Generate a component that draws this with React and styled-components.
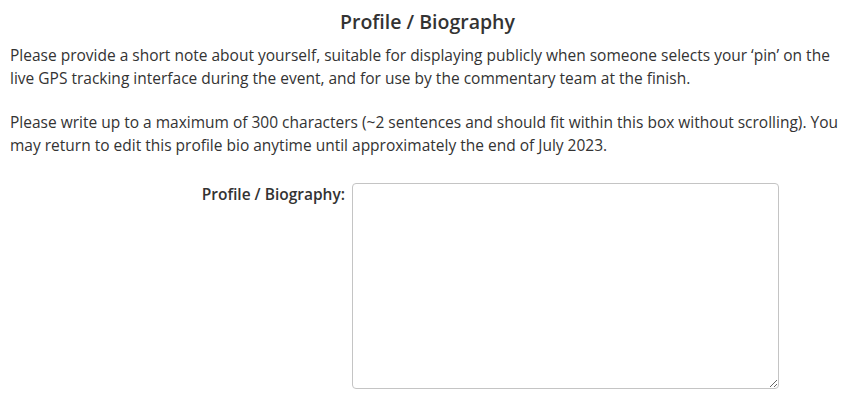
import styled, { createGlobalStyle } from 'styled-components';

const GlobalStyle = createGlobalStyle`
  body {
    margin: 0;
    background: #fff;
    font-family: "Open Sans", "Noto Sans", sans-serif;
    color: #333;
  }
`;

const Page = styled.div`
  padding: 10px 10px 0 10px;
  width: 835px;
`;

const Title = styled.h2`
  margin: 0 0 10px 0;
  text-align: center;
  font-size: 19.5px;
  font-weight: 600;
  line-height: 24px;
  color: #333;
`;

const Para = styled.p`
  margin: 0 0 21px 0;
  font-size: 15.5px;
  line-height: 23px;
`;

const FormRow = styled.div`
  display: grid;
  grid-template-columns: 335px 427px;
  column-gap: 7px;
  align-items: start;
  margin-top: 26px;
`;

const Label = styled.label`
  text-align: right;
  font-size: 15.5px;
  font-weight: 600;
  line-height: 20px;
  padding-top: 1px;
`;

const TextArea = styled.textarea`
  box-sizing: border-box;
  width: 427px;
  height: 206px;
  border: 1px solid #c4c4c4;
  border-radius: 4px;
  padding: 6px 8px;
  font-family: inherit;
  font-size: 14px;
  outline: none;
`;

function App() {
  return (
    <Page>
      <GlobalStyle />
      <Title>Profile / Biography</Title>
      <Para>
        Please provide a short note about yourself, suitable for displaying publicly when someone selects your ‘pin’ on the live GPS tracking interface during the event, and for use by the commentary team at the finish.
      </Para>
      <Para>
        Please write up to a maximum of 300 characters (~2 sentences and should fit within this box without scrolling). You may return to edit this profile bio anytime until approximately the end of July 2023.
      </Para>
      <FormRow>
        <Label htmlFor="bio">Profile / Biography:</Label>
        <TextArea id="bio" />
      </FormRow>
    </Page>
  );
}

export default App;
